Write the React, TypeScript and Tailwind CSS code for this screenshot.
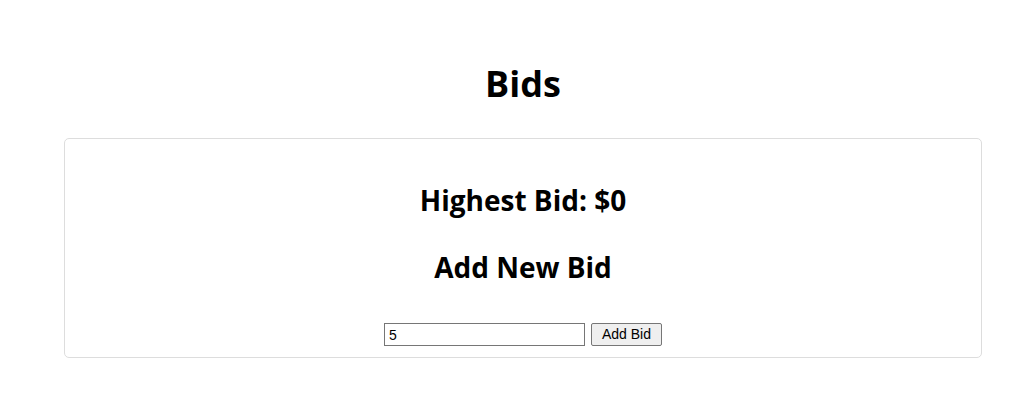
export default function App() {
  return (
    <div
      className="min-h-[420px] bg-white pl-[64px] pr-[30px] pt-[64px] text-black"
      style={{ fontFamily: '"Open Sans", "Noto Sans", sans-serif' }}
    >
      <h1 className="text-center text-[36px] font-bold leading-[40px]">Bids</h1>

      <div className="mt-[34px] rounded-[5px] border border-[#dddddd] px-5 pb-[11px] pt-[45px]">
        <h2 className="text-center text-[28px] font-bold leading-[32px]">Highest Bid: $0</h2>
        <h2 className="mt-[35px] text-center text-[28px] font-bold leading-[32px]">Add New Bid</h2>

        <div className="mt-[40px] flex items-center justify-center gap-[6px]">
          <input
            type="number"
            defaultValue={5}
            className="h-[23px] w-[201px] border border-[#767676] px-[4px] text-[14px] text-black outline-none [appearance:textfield]"
            style={{ fontFamily: '"Liberation Sans", Arial, sans-serif' }}
          />
          <button
            className="h-[23px] w-[71px] rounded-[2px] border border-[#767676] bg-[#efefef] text-[14px] text-black"
            style={{ fontFamily: '"Liberation Sans", Arial, sans-serif' }}
          >
            Add Bid
          </button>
        </div>
      </div>
    </div>
  );
}
